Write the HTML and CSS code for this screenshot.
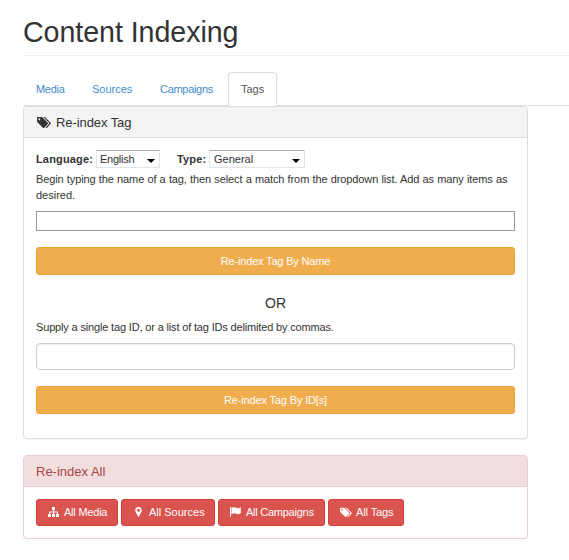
FILE: index.html
```
<!DOCTYPE html>
<html lang="en">
<head>
<meta charset="utf-8">
<title>Content Indexing</title>
<link rel="stylesheet" href="styles.css">
</head>
<body>
<svg class="sprite" aria-hidden="true">
  <symbol id="tags" viewBox="0 0 1920 1792"><path d="M448 448q0-53-37.5-90.5t-90.5-37.5-90.5 37.5-37.5 90.5 37.5 90.5 90.5 37.5 90.5-37.5 37.5-90.5zm1067 576q0 53-37 90l-491 492q-39 37-91 37-53 0-90-37l-715-716q-38-37-64.5-101t-26.5-117v-416q0-52 38-90t90-38h416q53 0 117 26.5t102 64.5l715 714q37 39 37 91zm384 0q0 53-37 90l-491 492q-39 37-91 37-36 0-59-14t-53-45l470-470q37-37 37-90 0-52-37-91l-715-714q-38-38-102-64.5t-117-26.5h224q53 0 117 26.5t102 64.5l715 714q37 39 37 91z"/></symbol>
</svg>
<header class="page-header"><h1><span class="title">Content Indexing</span></h1></header>
<nav class="tabs">
  <a class="tab media">Media</a>
  <a class="tab sources">Sources</a>
  <a class="tab campaigns">Campaigns</a>
  <a class="tab active">Tags</a>
</nav>
<main>
  <section class="panel panel-default">
    <h2 class="panel-heading"><svg class="icon-tags"><use href="#tags"/></svg><span>Re-index Tag</span></h2>
    <div class="panel-body">
      <div class="filters">
        <b class="label-language">Language:</b>
        <div class="select language"><span>English</span><i class="caret"></i></div>
        <b class="label-type">Type:</b>
        <div class="select type"><span>General</span><i class="caret"></i></div>
      </div>
      <p class="help"><span class="line-one">Begin typing the name of a tag, then select a match from the dropdown list. Add as many items as</span><br><span class="line-two">desired.</span></p>
      <input class="name-input" type="text" aria-label="Tag name">
      <button class="btn btn-warning"><span class="by-name">Re-index Tag By Name</span></button>
      <h3 class="or">OR</h3>
      <p class="ids-help">Supply a single tag ID, or a list of tag IDs delimited by commas.</p>
      <input class="id-input" type="text" aria-label="Tag IDs">
      <button class="btn btn-warning"><span class="by-id">Re-index Tag By ID[s]</span></button>
    </div>
  </section>
  <section class="panel panel-danger">
    <h2 class="panel-heading"><span>Re-index All</span></h2>
    <div class="actions">
      <button class="btn btn-danger all-media"><svg viewBox="0 0 11 10"><path d="M4 0h3v3H6v1.500h4V7h1v3H8V7h1V5.500H6V7h1v3H4V7h1V5.500H2V7h1v3H0V7h1V4.500h4V3H4z"/></svg><span>All Media</span></button>
      <button class="btn btn-danger all-sources"><svg viewBox="0 0 11 10"><path fill-rule="evenodd" d="M5.500 0C3.600 0 2.200 1.400 2.200 3.200c0 .8.2 1.200.6 2L5 9.600c.2.4.8.4 1 0l2.200-4.400c.4-.8.6-1.200.6-2C8.800 1.400 7.400 0 5.500 0zm0 1.700a1.500 1.500 0 1 1 0 3 1.500 1.500 0 0 1 0-3z"/></svg><span>All Sources</span></button>
      <button class="btn btn-danger all-campaigns"><svg viewBox="0 0 11 10"><path d="M0 0h1v10H0zM1.400 1C3.500-.2 5.200.2 6.500.9c1.300.6 2.600.3 4.300-.6v6c-1.500.9-3 1.200-4.500.5-1.300-.7-2.700-.6-4.900.5z"/></svg><span>All Campaigns</span></button>
      <button class="btn btn-danger all-tags"><svg class="icon-tags"><use href="#tags"/></svg><span>All Tags</span></button>
    </div>
  </section>
</main>
</body>
</html>
```
FILE: styles.css
```
* { box-sizing: border-box; }
body {
  margin: 0;
  padding-left: 23px;
  background: #fff;
  color: #333;
  font: 11px/16px "Liberation Sans", Arial, sans-serif;
  overflow: hidden;
}
h1, h2, h3, p { margin: 0; font-weight: 400; }
svg { fill: currentColor; flex: none; }
.sprite { display: none; }
.page-header { height: 56px; padding-top: 16px; border-bottom: 1px solid #eee; }
h1 { font-size: 28.6px; line-height: 32px; letter-spacing: -.05px; white-space: nowrap; }
.tabs {
  display: flex;
  height: 50px;
  padding-top: 16px;
  border-bottom: 1px solid #ddd;
}
.tab {
  height: 34px;
  padding: 9px 0 0 13px;
  color: #428bca;
}
.media { width: 56px; letter-spacing: -.3px; }
.sources { width: 68px; }
.campaigns { width: 81px; letter-spacing: -.3px; }
.tab.active {
  width: 49px;
  padding: 8px 0 0 12px;
  border: 1px solid #ddd;
  border-bottom-color: #fff;
  border-radius: 4px 4px 0 0;
  background: #fff;
  color: #555;
}
.panel {
  width: 505px;
  border: 1px solid #ddd;
  border-radius: 4px;
  box-shadow: 0 1px 1px rgba(0, 0, 0, .05);
  background: #fff;
}
.panel-default { height: 333px; margin-bottom: 16px; }
.panel-danger { height: 84px; border-color: #ebccd1; }
.panel-heading {
  display: flex;
  align-items: center;
  height: 31px;
  padding: 2px 12px 0;
  border-bottom: 1px solid #ddd;
  border-radius: 3px 3px 0 0;
  background: #f4f4f4;
  font-size: 13px;
  letter-spacing: -.08px;
}
.panel-heading .icon-tags { width: 14px; height: 13px; margin: -2px 5px 0 1px; }
.panel-danger .panel-heading { background: #f2dede; border-color: #ebccd1; color: #a94442; letter-spacing: 0; }
.panel-body { display: flex; flex-direction: column; padding: 12px 12px 0; }
.filters { display: flex; height: 18px; line-height: 18px; }
.label-language { width: 60px; letter-spacing: .15px; }
.label-type { width: 32px; margin-left: 17px; letter-spacing: .15px; }
.select {
  display: flex;
  align-items: center;
  justify-content: space-between;
  height: 18px;
  padding: 0 4px 0 3px;
  border: 1px solid #e2e3ea;
  border-top-color: #abadb3;
  border-radius: 1px;
}
.language { width: 64px; letter-spacing: -.25px; }
.type { width: 96px; padding-left: 4px; }
.caret {
  margin-top: 3px;
  border: 4px solid transparent;
  border-top-color: #000;
  border-bottom: 0;
}
.help { height: 32px; margin-top: 3px; white-space: nowrap; }
.line-one { letter-spacing: -.105px; word-spacing: .3px; }
input { width: 100%; margin: 0; background: #fff; }
.name-input { height: 20px; margin: 8px 0 16px; border: 1px solid #999; }
.btn {
  display: flex;
  align-items: center;
  justify-content: center;
  height: 28px;
  padding: 0;
  border: 1px solid #eea236;
  border-radius: 3px;
  background: #f0ad4e;
  color: #fff;
  font: inherit;
  white-space: nowrap;
}
.by-name { letter-spacing: -.18px; }
.by-id { letter-spacing: -.15px; }
.or { margin-top: 20px; font-size: 14px; text-align: center; }
.ids-help { margin-top: 8px; letter-spacing: -.16px; }
.id-input {
  height: 27px;
  margin: 8px 0 16px;
  border: 1px solid #ccc;
  border-radius: 4px;
  box-shadow: inset 0 1px 1px rgba(0, 0, 0, .075);
}
.actions { display: flex; gap: 3px; padding: 12px; }
.btn-danger {
  justify-content: flex-start;
  height: 27px;
  padding: 0 0 1px 11px;
  border-color: #d43f3a;
  background: #d9534f;
}
.btn-danger svg { width: 11px; height: 10px; margin-right: 5px; }
.btn-danger .icon-tags { width: 12px; height: 11px; margin-right: 4px; }
.all-media { width: 82px; letter-spacing: -.22px; }
.all-sources { width: 94px; }
.all-campaigns { width: 107px; letter-spacing: -.25px; }
.all-tags { width: 76px; letter-spacing: -.1px; }
```
